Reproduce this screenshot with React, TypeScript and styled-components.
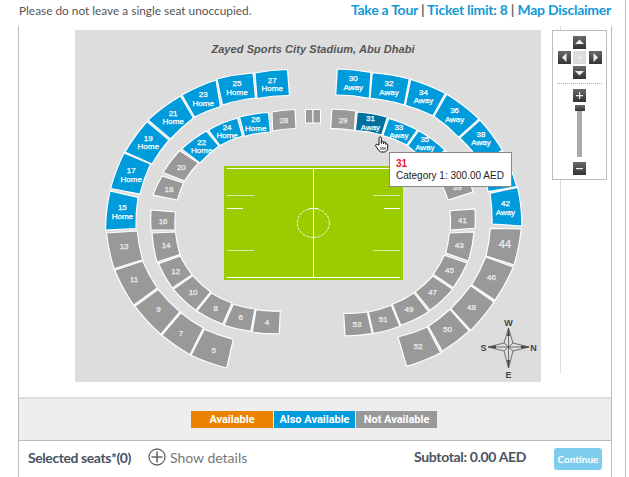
import React from "react";
import styled, { createGlobalStyle } from "styled-components";

type Pt = [number, number];
type Kind = "home" | "away" | "hover" | "off";
interface Section { id: string; kind: Kind; pts: Pt[]; outer: number; inner: number; big?: boolean }

const CX = 313;
const CY = 224;

const tierA = { outer: 190, inner: 160 };
const tierB = { outer: 130, inner: 110 };

const mk = (id: string, kind: Kind, tier: { outer: number; inner: number }, c: number[], big?: boolean): Section => ({
  id, kind, outer: tier.outer, inner: tier.inner, big,
  pts: [[c[0], c[1]], [c[2], c[3]], [c[4], c[5]], [c[6], c[7]]],
});

const sections: Section[] = [
  mk("15", "home", tierA, [105.5, 230, 110, 191, 138, 197.5, 136, 228.5]),
  mk("17", "home", tierA, [110.5, 188.5, 124, 153, 150.5, 164, 140, 194]),
  mk("19", "home", tierA, [125, 152, 147, 121.5, 169, 140, 152, 164]),
  mk("21", "home", tierA, [148, 120, 180.5, 96, 193.5, 118, 170.5, 139]),
  mk("23", "home", tierA, [182, 95, 216, 80, 220.5, 106.5, 194.5, 117]),
  mk("25", "home", tierA, [217, 79, 253, 73, 255.5, 98, 222.5, 105]),
  mk("27", "home", tierA, [255, 73, 287.5, 69.5, 289.5, 95.5, 257, 98.5]),
  mk("28", "off", tierB, [272, 112, 295, 109.5, 296, 128.5, 272.5, 131]),
  mk("26", "home", tierB, [239.5, 117, 268.5, 112.5, 270.5, 132, 244.5, 136.5]),
  mk("24", "home", tierB, [208.5, 130, 237.5, 118, 242.5, 136, 220, 145.5]),
  mk("22", "home", tierB, [181.5, 149, 206.5, 131, 219, 146, 200, 163]),
  mk("20", "off", tierB, [163, 172.5, 179.5, 150.5, 198.5, 163, 184.5, 181]),
  mk("18", "off", tierB, [153, 195, 162, 176, 183.5, 183, 177.5, 200]),
  mk("16", "off", tierB, [151, 230, 151, 210, 175.5, 212, 175, 230]),
  mk("14", "off", tierB, [152, 233, 157, 262, 180, 254.5, 175.5, 232]),
  mk("12", "off", tierB, [158.5, 263.7, 172.3, 288, 192, 274.7, 180.3, 256]),
  mk("10", "off", tierB, [173.3, 289.3, 195.7, 310.3, 210.7, 292, 192.7, 275.7]),
  mk("8", "off", tierB, [196.7, 311, 222.7, 324.3, 232, 303, 211.3, 293]),
  mk("6", "off", tierB, [224, 325.3, 250.7, 331.3, 255, 309, 233.3, 304.3]),
  mk("4", "off", tierB, [252.3, 332, 279.3, 333.7, 280.3, 311, 256, 309.7]),
  mk("13", "off", tierA, [106.5, 233, 114, 268.7, 142.7, 259.7, 137.3, 231]),
  mk("11", "off", tierA, [114.7, 270.3, 133.7, 305.3, 157.3, 288, 142.7, 261]),
  mk("9", "off", tierA, [135, 306.3, 160.7, 334.3, 180, 311.7, 158.3, 289.3]),
  mk("7", "off", tierA, [161.7, 335.3, 190, 354.7, 203.3, 328, 181, 312.7]),
  mk("5", "off", tierA, [191, 355.3, 226.7, 368, 233.3, 339.3, 204.3, 329.3]),
  mk("30", "away", tierA, [337.3, 69, 371, 72.3, 369.3, 98.3, 335.7, 95]),
  mk("32", "away", tierA, [372.3, 72.7, 409.3, 79, 404.3, 105, 370, 98.3]),
  mk("34", "away", tierA, [410.7, 79.3, 445.3, 93.3, 433, 115.7, 405.3, 105.3]),
  mk("36", "away", tierA, [446.7, 94.3, 479, 119, 458.7, 137.3, 434, 116.3]),
  mk("38", "away", tierA, [480, 120, 502.3, 150, 482, 164, 459.7, 138]),
  mk("40", "away", tierA, [503.3, 151.7, 516.7, 186.7, 488, 191.7, 483, 166]),
  mk("42", "away", tierA, [517.7, 187.3, 522, 226, 492, 224, 490, 193.3]),
  mk("44", "off", tierA, [521.3, 229, 514, 265, 486, 256, 490.3, 228.3], true),
  mk("46", "off", tierA, [513.3, 267, 495, 300.3, 471.7, 284.7, 485.7, 257]),
  mk("48", "off", tierA, [494, 302, 470.7, 330.3, 450.7, 308.7, 470.7, 285.7]),
  mk("50", "off", tierA, [469.3, 331, 442.3, 351.3, 428.3, 326.3, 450, 309.3]),
  mk("52", "off", tierA, [440.7, 352.7, 406.7, 366.3, 398, 337, 427.3, 327]),
  mk("29", "off", tierB, [331.7, 109.3, 355.7, 111, 354.3, 130.7, 330.7, 128.7]),
  mk("31", "hover", tierB, [357.3, 112, 387.3, 117.3, 381.7, 135, 355.3, 130.7]),
  mk("33", "away", tierB, [388.7, 118.3, 417.3, 130, 406.7, 145, 382.7, 135.7]),
  mk("35", "away", tierB, [418.7, 130.7, 445, 150, 428, 166, 407.7, 146]),
  mk("37", "off", tierB, [446, 151, 462, 172, 444, 183, 430, 166]),
  mk("39", "off", tierB, [467, 173, 473, 192, 448, 200, 441, 183]),
  mk("41", "off", tierB, [475, 209, 475, 228.3, 450.3, 230, 450, 210.7]),
  mk("43", "off", tierB, [474, 232, 468.3, 261, 445.7, 253, 449.3, 233]),
  mk("45", "off", tierB, [467.3, 263, 453.3, 287.7, 433.3, 274.3, 444.3, 255.3]),
  mk("47", "off", tierB, [452.7, 289.3, 430, 310.3, 415, 292, 432.7, 276]),
  mk("49", "off", tierB, [428.7, 311.7, 400.7, 325.3, 392.3, 304.3, 414, 293]),
  mk("51", "off", tierB, [400, 326.3, 373.3, 333.7, 368.3, 312, 391.3, 305.3]),
  mk("53", "off", tierB, [372.3, 333.7, 345, 335.7, 343.7, 313.3, 367.3, 312]),
];

const nudges: Record<string, Pt> = {
  "11": [-3, -2], "13": [-1, -2], "7": [-3, 0], "5": [0, 2], "44": [2, 0], "9": [0, -1],
  "15": [0, 1], "17": [0, 1], "27": [0, 1], "42": [0, 1], "35": [0, -4], "38": [0, -4],
  "34": [0, -1], "36": [0, -1], "19": [0, -1],
};
const hiddenLabels = new Set(["37", "40"]);

const fills: Record<Kind, string> = { home: "#009bdb", away: "#009bdb", hover: "#00719f", off: "#999999" };
const subs: Record<Kind, string> = { home: "Home", away: "Away", hover: "Away", off: "" };

const control = (a: Pt, b: Pt, r: number): Pt => {
  const mx = (a[0] + b[0]) / 2;
  const my = (a[1] + b[1]) / 2;
  const dx = b[0] - a[0];
  const dy = b[1] - a[1];
  const len = Math.hypot(dx, dy);
  let nx = -dy / len;
  let ny = dx / len;
  if (nx * (mx - CX) + ny * (my - CY) < 0) { nx = -nx; ny = -ny; }
  const bulge = (len * len) / (4 * r);
  return [mx + nx * bulge, my + ny * bulge];
};

const shape = (s: Section) => {
  const [a, b, c, d] = s.pts;
  const q1 = control(a, b, s.outer);
  const q2 = control(c, d, s.inner);
  return `M${a[0]} ${a[1]}Q${q1[0]} ${q1[1]} ${b[0]} ${b[1]}L${c[0]} ${c[1]}Q${q2[0]} ${q2[1]} ${d[0]} ${d[1]}Z`;
};

const center = (s: Section): Pt => {
  const n = nudges[s.id] ?? [0, 0];
  return [
    s.pts.reduce((t, p) => t + p[0], 0) / 4 + n[0],
    s.pts.reduce((t, p) => t + p[1], 0) / 4 + n[1],
  ];
};

const Global = createGlobalStyle`
  html, body { margin: 0; padding: 0; background: #fff; }
  body { font-family: "Lato", "Liberation Sans", sans-serif; }
`;

const Page = styled.div`
  width: 625px;
  height: 477px;
  overflow: hidden;
  border-right: 1px solid #bbbbbb;
  display: flex;
  flex-direction: column;
`;

const TopBar = styled.div`
  height: 26px;
  padding: 0 14px 0 19px;
  display: flex;
  justify-content: space-between;
  align-items: flex-start;
`;

const Notice = styled.div`
  font-size: 11.85px;
  line-height: 22px;
  color: #555;
`;

const Links = styled.div`
  font-size: 14px;
  line-height: 20px;
  font-weight: 700;
  color: #666;
  letter-spacing: -0.25px;
  white-space: nowrap;
`;

const TopLink = styled.a`
  color: #1399d6;
`;

const Frame = styled.div`
  margin-left: 18px;
  width: 592px;
  flex: 1;
  border-left: 1px solid #bbbbbb;
  border-right: 1px solid #bbbbbb;
  display: flex;
  flex-direction: column;
`;

const MapArea = styled.div`
  height: 371px;
  display: flex;
  align-items: flex-start;
`;

const Stage = styled.div`
  position: relative;
  margin: 4px 0 0 56px;
  width: 466px;
  height: 352px;
  background: #dddddd;
  flex: none;
`;

const MapSvg = styled.svg`
  display: block;
  width: 466px;
  height: 352px;
`;

const Rail = styled.div`
  position: relative;
  margin-left: 19px;
  height: 347px;
  width: 0;
  border-left: 1px solid #dddddd;
`;

const ZoomBox = styled.div`
  position: absolute;
  left: -9px;
  top: 4px;
  width: 53px;
  height: 148px;
  background: #fff;
  border: 1px solid #bbbbbb;
  display: flex;
  flex-direction: column;
  align-items: center;
`;

const Pad = styled.div`
  margin-top: 5px;
  display: grid;
  grid-template-columns: repeat(3, 13px);
  grid-template-rows: repeat(3, 13px);
  gap: 2px 2.5px;
`;

const Key = styled.div<{ $col?: number; $row?: number }>`
  grid-column: ${(p) => p.$col ?? "auto"};
  grid-row: ${(p) => p.$row ?? "auto"};
  width: 13px;
  height: 13px;
  background: linear-gradient(#6a6a6a, #333333);
  color: #fff;
  display: flex;
  align-items: center;
  justify-content: center;
`;

const HomeKey = styled(Key)`
  background: #dddddd;
`;

const Dots = styled.div`
  margin-top: 4px;
  width: 45px;
  border-top: 1px dotted #aaaaaa;
`;

const ZoomKey = styled(Key)`
  margin-top: 5px;
`;

const ZoomOutKey = styled(Key)`
  margin-top: 5px;
`;

const Handle = styled.div`
  margin-top: 3px;
  width: 10px;
  height: 6px;
  background: linear-gradient(#6a6a6a, #333333);
`;

const Track = styled.div`
  width: 5px;
  height: 46px;
  background: #aaaaaa;
`;

const Tip = styled.div`
  position: absolute;
  left: 314px;
  top: 122px;
  width: 121px;
  height: 33px;
  box-sizing: content-box;
  background: #fff;
  border: 1px solid #888888;
  font-family: "Liberation Sans", Arial, sans-serif;
  font-size: 10px;
  line-height: 12px;
  color: #222;
  white-space: nowrap;
`;

const TipTitle = styled.div`
  margin: 5px 0 0 6px;
  color: #e0202c;
  font-weight: 700;
`;

const TipBody = styled.div`
  margin: 0 0 0 6px;
`;

const Hand = styled.svg`
  position: absolute;
  left: 299px;
  top: 106px;
  width: 15px;
  height: 17px;
`;

const Legend = styled.div`
  height: 41px;
  border-top: 2px solid #dddddd;
  border-bottom: 1px solid #bbbbbb;
  background: #efeded;
  display: flex;
  align-items: center;
  padding-left: 172px;
  gap: 1px;
  box-sizing: content-box;
`;

const Chip = styled.div<{ $bg: string; $w: number }>`
  width: ${(p) => p.$w}px;
  height: 17px;
  background: ${(p) => p.$bg};
  color: #fff;
  font-family: "Roboto", "Liberation Sans", sans-serif;
  font-weight: 700;
  font-size: 11px;
  line-height: 17px;
  text-align: center;
`;

const Footer = styled.div`
  flex: 1;
  display: flex;
  align-items: center;
  padding: 0 9px 4px 9px;
`;

const Selected = styled.div`
  font-size: 14px;
  font-weight: 700;
  color: #4a5360;
  letter-spacing: -0.42px;
`;

const Details = styled.div`
  margin-left: 17px;
  display: flex;
  align-items: center;
  gap: 4px;
  font-size: 14px;
  color: #777;
`;

const Subtotal = styled.div`
  margin: 0 0 2px auto;
  font-size: 14px;
  font-weight: 700;
  color: #4a5360;
  letter-spacing: -0.35px;
`;

const Continue = styled.button`
  margin: 4px 0 0 28px;
  width: 48px;
  height: 22px;
  border: 0;
  padding: 0;
  border-radius: 3px;
  background: #7fcdee;
  color: #fff;
  font-family: "Lato", sans-serif;
  font-size: 10px;
  font-weight: 700;
`;

const Label = styled.text<{ $size: number; $tone: string }>`
  font-family: "Liberation Sans", Arial, sans-serif;
  font-size: ${(p) => p.$size}px;
  fill: ${(p) => p.$tone};
  stroke: ${(p) => p.$tone};
  stroke-width: 0.25px;
  text-anchor: middle;
`;

const MapTitle = styled.text`
  font-family: "Liberation Sans", Arial, sans-serif;
  font-size: 11px;
  font-weight: 700;
  font-style: italic;
  letter-spacing: 0.07px;
  fill: #555555;
  text-anchor: middle;
`;

const CompassLetter = styled.text`
  font-family: "Liberation Sans", Arial, sans-serif;
  font-size: 9px;
  font-weight: 700;
  fill: #444444;
  text-anchor: middle;
`;

const Seat: React.FC<{ s: Section }> = ({ s }) => {
  const [x, y] = center(s);
  const sub = subs[s.kind];
  const tone = s.kind === "off" ? "#eeeeee" : "#ffffff";
  const hidden = hiddenLabels.has(s.id);
  return (
    <g>
      <path d={shape(s)} fill={fills[s.kind]} stroke="#ffffff" strokeWidth={1.2} />
      {hidden ? null : sub ? (
        <>
          <Label $size={8} $tone={tone} x={x} y={y - 2.5}>{s.id}</Label>
          <Label $size={8} $tone={tone} x={x} y={y + 6}>{sub}</Label>
        </>
      ) : (
        <Label $size={s.big ? 11 : 8} $tone={tone} x={x} y={y + 3}>{s.id}</Label>
      )}
    </g>
  );
};

const Pitch = () => (
  <g>
    <rect x={224} y={166} width={179} height={114} fill="#9acc00" />
    <g stroke="#ffffff" strokeWidth={1} fill="none">
      <path d="M227 168.5H400M227 277.5H400M313.5 168.5V277.5M227 208.5H243M384 208.5H400M309 208.5H318" />
      <path d="M227 195.5H254M373 195.5H400M227 250.5H254M373 250.5H400" opacity={0.6} />
      <ellipse cx={313.3} cy={223} rx={16} ry={14.5} strokeDasharray="3 1" opacity={0.85} />
    </g>
  </g>
);

const Compass = () => (
  <g>
    <path
      d="M508.5 328L513 343L529 347L513 351L508.5 368L504 351L488 347L504 343Z"
      fill="none" stroke="#444444" strokeWidth={0.7}
    />
    <path d="M508.5 328V368M488 347H529M504 343L513 351M513 343L504 351" stroke="#444444" strokeWidth={0.7} />
    <path d="M508.5 328L510 336H507ZM508.5 368L510 360H507ZM488 347L496 345.5V348.5ZM529 347L521 345.5V348.5Z" fill="#444444" />
    <CompassLetter x={508.5} y={326}>W</CompassLetter>
    <CompassLetter x={508.5} y={377.5}>E</CompassLetter>
    <CompassLetter x={483.5} y={350.5}>S</CompassLetter>
    <CompassLetter x={533.5} y={350.5}>N</CompassLetter>
  </g>
);

const Tri = ({ d, stroke }: { d: string; stroke?: boolean }) => (
  <svg width="13" height="13" viewBox="0 0 13 13">
    <path d={d} fill={stroke ? "none" : "#eeeeee"} stroke={stroke ? "#f4f4f4" : "none"} />
  </svg>
);

export default function App() {
  return (
    <Page>
      <Global />
      <TopBar>
        <Notice>Please do not leave a single seat unoccupied.</Notice>
        <Links>
          <TopLink>Take a Tour</TopLink> | <TopLink>Ticket limit: 8</TopLink> | <TopLink>Map Disclaimer</TopLink>
        </Links>
      </TopBar>
      <Frame>
        <MapArea>
          <Stage>
            <MapSvg viewBox="75 30 466 352">
              <MapTitle x={313} y={53}>Zayed Sports City Stadium, Abu Dhabi</MapTitle>
              <Pitch />
              <rect x={305.5} y={109.5} width={7.5} height={13.5} fill="#999999" stroke="#ffffff" />
              <rect x={313} y={109.5} width={7.5} height={13.5} fill="#999999" stroke="#ffffff" />
              {sections.map((s) => <Seat key={s.id} s={s} />)}
              <Compass />
            </MapSvg>
            <Hand viewBox="0 0 15 17">
              <path
                d="M5 9V2.2a1.2 1.2 0 0 1 2.4 0V7.5V6.4a1.1 1.1 0 0 1 2.2 0V8V7a1.1 1.1 0 0 1 2.2 0V8.4a1 1 0 0 1 1.9 .2V12c0 2.4-1.6 4-3.6 4H7.6c-1.4 0-2.2-.7-3-1.9L1.7 10c-.8-1.3.9-2.3 1.8-1.2Z"
                fill="#ffffff" stroke="#111111" strokeWidth={1}
              />
              <path d="M7 11v3M9 11v3M11 11v3" stroke="#111111" strokeWidth={0.8} />
            </Hand>
            <Tip>
              <TipTitle>31</TipTitle>
              <TipBody>Category 1: 300.00 AED</TipBody>
            </Tip>
          </Stage>
          <Rail>
            <ZoomBox>
              <Pad>
                <Key $col={2} $row={1}><Tri d="M6.5 3.5L11 8H2Z" /></Key>
                <Key $col={1} $row={2}><Tri d="M4 6.5L8.5 2V11Z" /></Key>
                <HomeKey $col={2} $row={2}><Tri d="M6.5 4V9M4 6.5H9" stroke /></HomeKey>
                <Key $col={3} $row={2}><Tri d="M9 6.5L4.5 2V11Z" /></Key>
                <Key $col={2} $row={3}><Tri d="M6.5 9.5L11 5H2Z" /></Key>
              </Pad>
              <Dots />
              <ZoomKey><Tri d="M6 3H7.2V6H10V7.2H7.2V10H6V7.2H3V6H6Z" /></ZoomKey>
              <Handle />
              <Track />
              <ZoomOutKey><Tri d="M3 6H10V7.2H3Z" /></ZoomOutKey>
            </ZoomBox>
          </Rail>
        </MapArea>
        <Legend>
          <Chip $bg="#e98300" $w={82}>Available</Chip>
          <Chip $bg="#009bdb" $w={81}>Also Available</Chip>
          <Chip $bg="#999999" $w={81}>Not Available</Chip>
        </Legend>
        <Footer>
          <Selected>Selected seats*(0)</Selected>
          <Details>
            <svg width="18" height="18" viewBox="0 0 18 18" fill="none" stroke="#666666" strokeWidth={1.3}>
              <circle cx="9" cy="9" r="8" />
              <path d="M9 3.5V14.5M3.5 9H14.5" strokeWidth={1.6} />
            </svg>
            <span>Show details</span>
          </Details>
          <Subtotal>Subtotal: 0.00 AED</Subtotal>
          <Continue>Continue</Continue>
        </Footer>
      </Frame>
    </Page>
  );
}
